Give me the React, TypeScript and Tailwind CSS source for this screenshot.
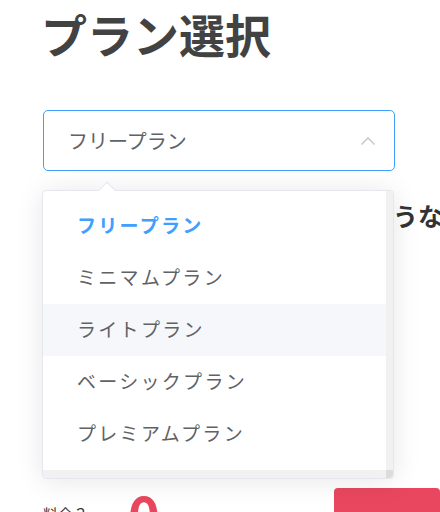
import { useState } from 'react'

const PLANS = ['フリープラン', 'ミニマムプラン', 'ライトプラン', 'ベーシックプラン', 'プレミアムプラン']

function App() {
  const [selected, setSelected] = useState('フリープラン')
  const [hovered] = useState('ライトプラン')

  return (
    <div className="relative w-[440px] h-[512px] overflow-hidden bg-white font-['Noto_Sans_CJK_JP','Noto_Sans',sans-serif]">
      <div className="px-[43px]">
        {/* TITLE */}
        <h1 className="pt-[5px] -ml-[2px] text-[46px] font-bold leading-[57px] text-[#424242] whitespace-nowrap">
          プラン選択
        </h1>

        {/* SELECT */}
        <div className="mt-[48px] w-[352px] h-[61px] flex items-center justify-between border border-[#409EFF] rounded-[5px] pl-[24px] pr-[18px]">
          <span className="text-[20px] text-[#606266]">{selected}</span>
          <svg width="16" height="10" viewBox="0 0 16 10" fill="none">
            <path d="M1.5 8.5 L8 2 L14.5 8.5" stroke="#C0C4CC" strokeWidth="1.3" />
          </svg>
        </div>

        {/* HIDDEN CONTENT */}
        <p className="mt-[26px] text-[25px] font-bold leading-[36px] text-[#333] whitespace-nowrap">
          あなたに合ったプランはどのようなものでしょうか？
        </p>
        <div className="h-[251px]" />

        {/* PRICE ROW */}
        <div className="flex items-start">
          <span className="mt-[19px] text-[15px] text-[#333]">料金？</span>
          <span className="ml-[40px] -mt-[1px] text-[54px] font-bold leading-[60px] text-[#E8475F]">0</span>
          <div className="ml-auto -mr-[43px] mt-[4px] w-[106px] h-[40px] rounded-[4px] bg-[#E8475F]" />
        </div>
      </div>

      {/* DROPDOWN */}
      <div className="absolute left-[42px] top-[190px] w-[352px] h-[289px] bg-white border border-[#E4E7ED] rounded-[4px] shadow-[0_2px_28px_rgba(0,0,0,0.1)]">
        <div className="absolute -top-[7px] left-[58px] w-[12px] h-[12px] rotate-45 bg-white border-l border-t border-[#E4E7ED]" />
        <div className="relative flex h-full overflow-hidden rounded-[4px]">
          <div className="flex-1 flex flex-col">
            <ul className="flex-1 pt-[9px]">
              {PLANS.map(p => (
                <li
                  key={p}
                  onClick={() => setSelected(p)}
                  className={
                    'h-[52px] flex items-center pl-[34px] text-[19px] tracking-[2.3px] cursor-pointer ' +
                    (p === selected ? 'font-bold text-[#409EFF] ' : 'text-[#606266] ') +
                    (p === hovered ? 'bg-[#F5F7FA]' : '')
                  }
                >
                  <span className="-mt-[2px]">{p}</span>
                </li>
              ))}
            </ul>
            <div className="h-[8px] bg-[#F1F1F1]" />
          </div>
          <div className="w-[7px] flex flex-col bg-[#F1F1F1]">
            <div className="flex-1" />
            <div className="h-[8px] bg-[#DCDCDC]" />
          </div>
        </div>
      </div>
    </div>
  )
}

export default App
